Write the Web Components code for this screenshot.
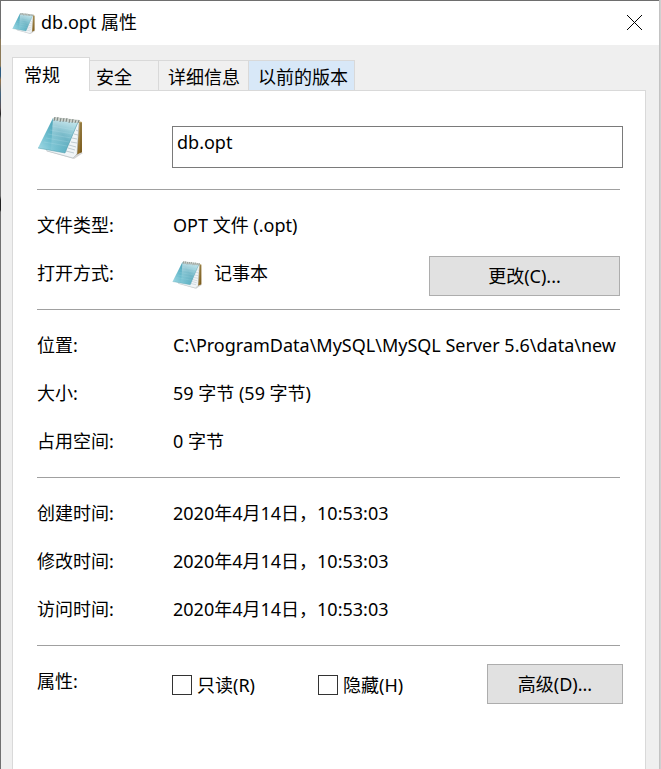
<!DOCTYPE html>
<html lang="zh-CN">
<head>
<meta charset="utf-8">
<title>db.opt 属性</title>
<style>
html, body { height: 100%; }
body { margin: 0; overflow: hidden; background: #c6c6c6; color: #000;
  font: 18px/24px "Noto Sans", "Noto Sans CJK SC", sans-serif; }
</style>
</head>
<body>
<properties-window>
  <title-bar slot="title">db.opt 属性</title-bar>
  <tab-strip slot="tabs">
    <tab-button class="general" selected>常规</tab-button>
    <tab-button class="security">安全</tab-button>
    <tab-button class="details">详细信息</tab-button>
    <tab-button class="versions" hot>以前的版本</tab-button>
  </tab-strip>
  <file-header value="db.opt"></file-header>
  <property-group>
    <property-row label="文件类型:">OPT 文件 (.opt)</property-row>
    <property-row label="打开方式:">
      <app-name>记事本</app-name>
      <push-button slot="action" style="--button-width:191px;--button-gap:3px">更改(C)...</push-button>
    </property-row>
  </property-group>
  <property-group>
    <property-row label="位置:">C:\ProgramData\MySQL\MySQL Server 5.6\data\new</property-row>
    <property-row label="大小:">59 字节 (59 字节)</property-row>
    <property-row label="占用空间:">0 字节</property-row>
  </property-group>
  <property-group>
    <property-row label="创建时间:">2020年4月14日，10:53:03</property-row>
    <property-row label="修改时间:">2020年4月14日，10:53:03</property-row>
    <property-row label="访问时间:">2020年4月14日，10:53:03</property-row>
  </property-group>
  <property-group>
    <attribute-row label="属性:">
      <check-field>只读(R)</check-field>
      <check-field>隐藏(H)</check-field>
      <push-button slot="action" style="--button-width:136px">高级(D)...</push-button>
    </attribute-row>
  </property-group>
</properties-window>

<script>
const define = (name, markup, setup) => {
  const template = document.createElement('template');
  template.innerHTML = markup;
  customElements.define(name, class extends HTMLElement {
    constructor() {
      super();
      this.attachShadow({ mode: 'open' }).append(template.content.cloneNode(true));
    }
    connectedCallback() { if (setup) setup(this, this.shadowRoot); }
  });
};

define('notepad-icon', `
<style>:host { display: block; flex: none; } svg { display: block; width: 100%; height: 100%; }</style>
<svg viewBox="0 0 46 46" aria-hidden="true">
  <defs>
    <linearGradient id="cover" x1="0" y1="0.8" x2="1" y2="0.2">
      <stop offset="0" stop-color="#9bd6e2"/><stop offset=".3" stop-color="#6cbccd"/>
      <stop offset=".6" stop-color="#4fa5b9"/><stop offset="1" stop-color="#7cc6d4"/>
    </linearGradient>
    <linearGradient id="shine" x1="0" y1="0" x2="0" y2="1">
      <stop offset="0" stop-color="#fff" stop-opacity=".65"/><stop offset=".45" stop-color="#fff" stop-opacity=".25"/>
      <stop offset="1" stop-color="#fff" stop-opacity="0"/>
    </linearGradient>
    <linearGradient id="back" x1="0" y1="0" x2="0" y2="1">
      <stop offset="0" stop-color="#b39a5c"/><stop offset="1" stop-color="#8a6520"/>
    </linearGradient>
  </defs>
  <path d="M9 36L37 44L46 38L30 34Z" fill="#d4d4d4"/>
  <path d="M41 6L45 7L45 37L39 40Z" fill="url(#back)"/>
  <path d="M44 8L44 38" stroke="#5e4718" stroke-width=".7"/>
  <path d="M41 7L28 36L9 34L10 36L36 43L40 39L42 8Z" fill="#f1f5f7" stroke="#a8b3b8" stroke-width=".5"/>
  <path d="M39 15L41 16M37 19L41 20M35 23L40 24M34 27L40 28M32 30L39 32M31 33L38 35M29 36L37 38" stroke="#b3c0c8" stroke-width=".8"/>
  <path d="M16 3L41 7L28 38L1 33Z" fill="url(#cover)"/>
  <path d="M16 3L41 7L28 38L14 35Z" fill="url(#shine)"/>
  <path d="M15 11L37 15M13 15L36 19M11 19L34 23M9 23L32 27M7 27L30 31" stroke="#c4e8ef" stroke-opacity=".3" stroke-width=".7"/>
  <path d="M1 33L28 38L41 7" fill="none" stroke="#4c9aaa" stroke-width=".5"/>
  <path d="M17 2L43 5L42 8L16 5Z" fill="#c9cfc9"/>
  <path d="M18 2L17 6M21 2L20 6M24 3L23 7M27 3L26 7M30 3L29 7M33 4L32 8M36 4L35 8M39 5L38 8M42 5L41 8" stroke="#7f8884" stroke-width="1"/>
</svg>`);

define('properties-window', `
<style>
:host { display: flex; height: 100vh; }
.window { flex: 1; min-width: 0; display: flex; flex-direction: column; background: #efefef;
  border-top: 1px solid #6e6e6e; box-sizing: border-box; }
.left { width: 1px; background: linear-gradient(#6e6e6e 38px, #8b7958 40px, #8b7958 66px, #2d5b80 68px, #2d5b80 76px, #9a7449 80px, #3f6380 94px, #5b5054 108px, #222 114px, #707070 118px, #707070 196px, #222 200px, #222 210px, #707070 212px); }
.right { width: 2px; background: linear-gradient(90deg, #c3c3c3 50%, #d0d0d0 50%); }
.tabs { padding: 12px 11px 0; }
main { flex: 1; margin: 0 13px 0 11px; padding: 0 22px 0 24px; background: #fff;
  border: 1px solid #d9d9d9; border-bottom: 0; min-height: 0; }
</style>
<div class="left"></div>
<div class="window">
  <slot name="title"></slot>
  <div class="tabs"><slot name="tabs"></slot></div>
  <main><slot></slot></main>
</div>
<div class="right"></div>`);

define('title-bar', `
<style>
:host { display: block; background: #fff; }
header { display: flex; align-items: center; height: 44px; padding: 0 16px 0 11px; }
notepad-icon { width: 23px; height: 23px; margin-right: 6px; }
h1 { flex: 1; margin: 0; padding-bottom: 2px; font: inherit; }
button { border: 0; padding: 0; background: none; width: 16px; height: 16px; }
svg { display: block; }
</style>
<header>
  <notepad-icon></notepad-icon>
  <h1><slot></slot></h1>
  <button type="button" aria-label="关闭"><svg width="16" height="16" viewBox="0 0 16 16"><path d="M0 0L15 15M15 0L0 15" stroke="#000" stroke-width="1"/></svg></button>
</header>`);

define('tab-strip', `
<style>
:host { display: block; }
div { display: flex; align-items: flex-end; }
::slotted(.general) { --pad: 0 29px 0 11px; }
::slotted(.security) { --pad: 2px 26px 0 6px; }
::slotted(.details) { --pad: 2px 8px 0 9px; }
::slotted(.versions) { --pad: 2px 6px 0 9px; }
</style>
<div role="tablist"><slot></slot></div>`);

define('tab-button', `
<style>
:host { display: block; }
button { display: block; margin: 0; font: inherit; color: inherit; height: 30px; padding: var(--pad);
  border: solid #d9d9d9; border-width: 1px 1px 0 0; background: #f0f0f0; white-space: nowrap; }
:host([hot]) button { background: #d8e8f8; }
:host([selected]) { margin-bottom: -1px; }
:host([selected]) button { position: relative; height: 34px; border-left-width: 1px; background: #fff; }
</style>
<button type="button" role="tab"><slot></slot></button>`,
(host, root) => root.querySelector('button').setAttribute('aria-selected', host.hasAttribute('selected')));

define('file-header', `
<style>
:host { display: flex; align-items: flex-start; padding: 24px 0 21px; }
.icon { width: 135px; flex: none; }
notepad-icon { width: 46px; height: 46px; }
input { flex: 1; min-width: 0; box-sizing: border-box; height: 42px; margin-top: 11px; padding: 0 4px 10px;
  border: 1px solid #7a7a7a; border-radius: 0; background: #fff; font: inherit; color: inherit; outline: 0; }
</style>
<div class="icon"><notepad-icon></notepad-icon></div>
<input type="text" aria-label="文件名">`,
(host, root) => { root.querySelector('input').value = host.getAttribute('value'); });

define('property-group', `
<style>
:host { display: block; padding-bottom: 12px; }
hr { border: 0; height: 1px; margin: 0 3px 11px 0; background: #a0a0a0; }
</style>
<hr><slot></slot>`);

define('property-row', `
<style>
:host { display: flex; align-items: center; height: 48px; }
.label { width: 135px; flex: none; }
.value { flex: 1; min-width: 0; overflow: hidden; white-space: nowrap; padding-left: 1px; }
:host([media]) .value { padding-left: 0; }
.action { padding-top: 6px; }
</style>
<span class="label"></span><div class="value"><slot></slot></div><div class="action"><slot name="action"></slot></div>`,
(host, root) => {
  root.querySelector('.label').textContent = host.getAttribute('label');
  host.toggleAttribute('media', !!host.querySelector('app-name'));
});

define('attribute-row', `
<style>
:host { display: flex; align-items: center; height: 48px; }
.label { width: 135px; flex: none; }
.options { flex: 1; min-width: 0; display: grid; grid-template-columns: 146px 1fr; padding-top: 8px; }
.action { padding-top: 6px; }
</style>
<span class="label"></span><div class="options"><slot></slot></div><div class="action"><slot name="action"></slot></div>`,
(host, root) => { root.querySelector('.label').textContent = host.getAttribute('label'); });

define('app-name', `
<style>
:host { display: flex; align-items: center; gap: 12px; }
.icon { padding-top: 4px; }
notepad-icon { width: 30px; height: 30px; }
</style>
<div class="icon"><notepad-icon></notepad-icon></div><span><slot></slot></span>`);

define('check-field', `
<style>
:host { display: block; }
label { display: flex; align-items: center; gap: 5px; white-space: nowrap; }
input { appearance: none; flex: none; box-sizing: border-box; width: 20px; height: 20px; margin: 0;
  border: 1px solid #333; background: #fff; }
input:checked { background: #333; box-shadow: inset 0 0 0 4px #fff; }
</style>
<label><input type="checkbox"><span><slot></slot></span></label>`);

define('push-button', `
<style>
:host { display: block; flex: none; margin-right: var(--button-gap, 0); }
button { display: block; box-sizing: border-box; width: var(--button-width); height: 40px; padding: 0; margin: 0;
  border: 1px solid #adadad; background: #e1e1e1; font: inherit; color: inherit; }
</style>
<button type="button"><slot></slot></button>`);
</script>
</body>
</html>
